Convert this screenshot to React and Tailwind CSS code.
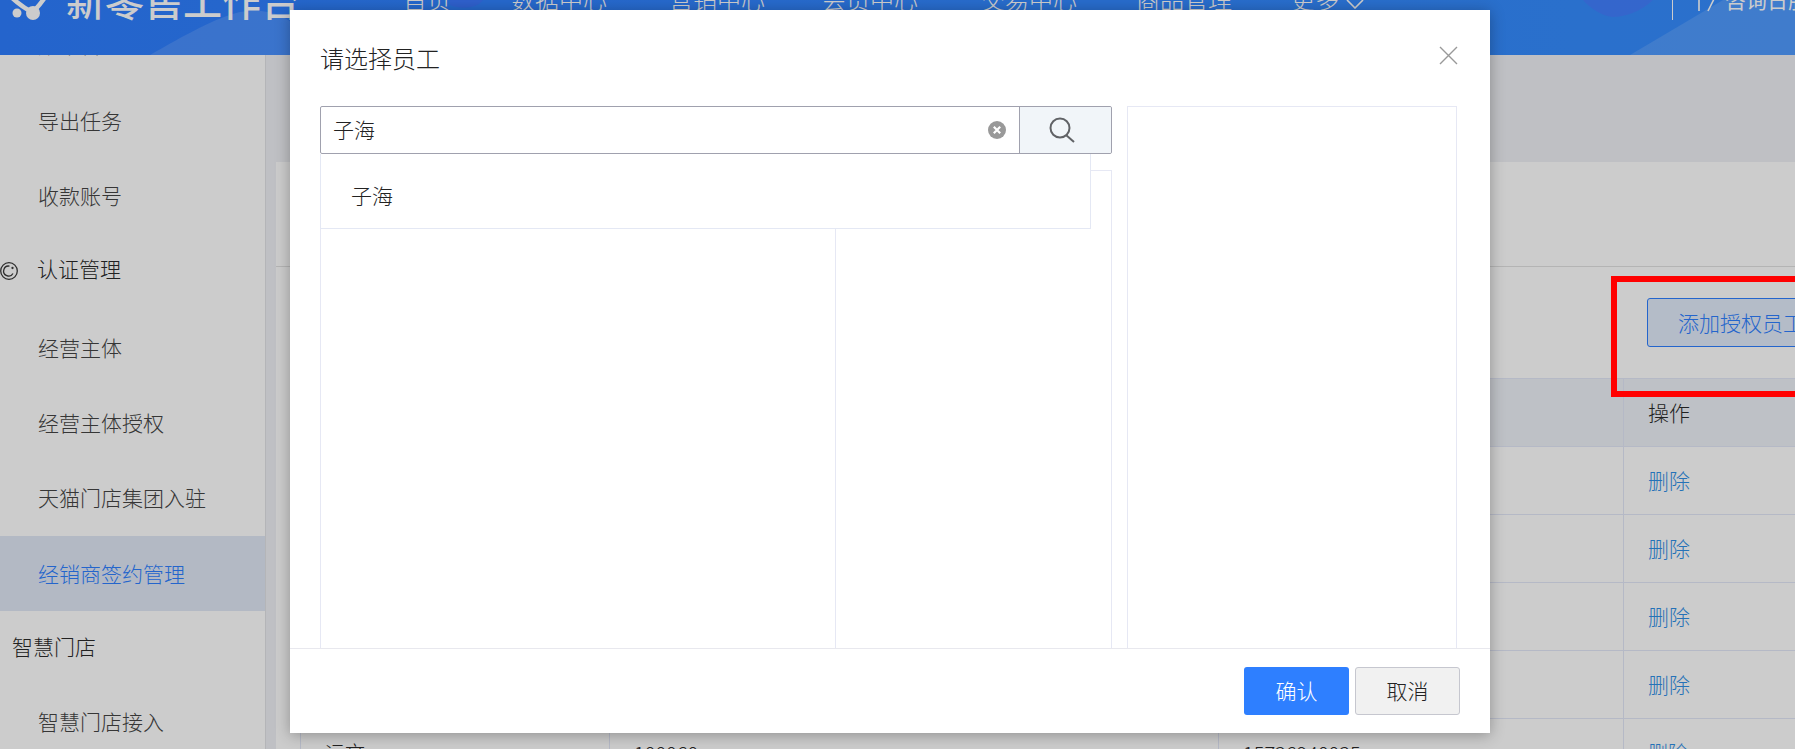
const navItems = [
  { label: '首页', width: 'w-[108px]' },
  { label: '数据中心', width: 'w-[158px]' },
  { label: '营销中心', width: 'w-[153px]' },
  { label: '会员中心', width: 'w-[159px]' },
  { label: '交易中心', width: 'w-[155px]' },
  { label: '商品管理', width: 'w-[155px]' },
  { label: '更多', width: 'w-[100px]', arrow: true },
];

function Chevron() {
  return (
    <svg width="18" height="10" viewBox="0 0 18 10" className="ml-[7px] mt-[9px] shrink-0" fill="none" stroke="currentColor" strokeWidth="1.6">
      <path d="M1 1l8 8 8-8" />
    </svg>
  );
}

function Header() {
  return (
    <header className="relative z-10 h-[55px] overflow-hidden bg-gradient-to-r from-[#2e7eff] to-[#368eff] text-white">
      {/* background shapes of the banner */}
      <svg className="absolute inset-0" width="1795" height="55" viewBox="0 0 1795 55">
        <path d="M150 55C185 35 215 18 240 12C265 8 285 14 300 30L300 55Z" fill="#ffffff" fillOpacity="0.13" />
        <path d="M450 0H483C478 8 462 10 450 5Z" fill="#5b5cff" fillOpacity="0.25" />
        <path d="M1583 0H1653C1640 12 1625 17 1612 17C1600 15 1590 8 1583 0Z" fill="#6a5cff" fillOpacity="0.25" />
        <path d="M1630 55L1723 0H1795V55Z" fill="#ffffff" fillOpacity="0.13" />
      </svg>
      <div className="relative flex h-[60px] -mt-[30px] items-center">
        <svg className="ml-[10px] mt-[28px] shrink-0" width="40" height="60" viewBox="0 0 40 60" fill="none">
          <circle cx="7" cy="29" r="4.5" fill="#fff" />
          <circle cx="23" cy="29" r="7" fill="#fff" />
          <path d="M-2 10C8 20 14 24 22 28C28 24 30 20 36 12" stroke="#fff" strokeWidth="4.5" />
        </svg>
        <div className="ml-[16px] w-[337px] -mt-[2px] text-[39px] font-medium whitespace-nowrap">新零售工作台</div>
        {navItems.map((item) => (
          <div key={item.label} className={`flex items-center text-[24px] font-light -mt-[2px] shrink-0 ${item.width}`}>
            {item.label}
            {item.arrow && <Chevron />}
          </div>
        ))}
        <div className="absolute left-[1672px] top-[30px] h-[20px] w-px bg-white" />
        <div className="absolute left-[1698px] top-[14px] flex items-center text-[21px] whitespace-nowrap">
          <svg width="18" height="26" viewBox="0 0 18 26" fill="none" stroke="currentColor" strokeWidth="1.6">
            <path d="M1 4v20M14 4l3 6-7 14" />
          </svg>
          <span className="ml-[9px]">咨询日服务</span>
        </div>
      </div>
    </header>
  );
}

function AuthIcon() {
  return (
    <svg className="absolute left-0 top-[28px]" width="18" height="20" viewBox="0 0 18 20" fill="none" stroke="#3a3a3a" strokeWidth="1.3">
      <circle cx="9" cy="10" r="8.3" />
      <path d="M13 12.5a5 5 0 1 1-3.5-7.4" />
      <circle cx="12.5" cy="7" r="0.5" fill="#3a3a3a" />
    </svg>
  );
}

function Sidebar() {
  return (
    <aside className="w-[266px] shrink-0 border-r border-[#e2e3e6] bg-white -mt-[47px] text-[21px] font-light text-[#444]">
      <div className="flex h-[75px] items-center pb-[1px] pl-[38px]">账单管理</div>
      <div className="flex h-[75px] items-center pl-[38px]">导出任务</div>
      <div className="flex h-[75px] items-center pl-[38px]">收款账号</div>
      <div className="relative mb-[3px] flex h-[75px] items-center pb-[4px] pl-[37px] text-[#2a2a2a]">
        <AuthIcon />
        认证管理
      </div>
      <div className="flex h-[75px] items-center pb-[2px] pl-[38px]">经营主体</div>
      <div className="flex h-[75px] items-center pb-[2px] pl-[38px]">经营主体授权</div>
      <div className="flex h-[75px] items-center pb-[1px] pl-[38px]">天猫门店集团入驻</div>
      <div className="flex h-[75px] items-center bg-[#e0e8f6] pl-[38px] text-[#2e7fff]">经销商签约管理</div>
      <div className="flex h-[75px] items-center pb-[3px] pl-[12px] text-[#2a2a2a]">智慧门店</div>
      <div className="flex h-[75px] items-center pb-[4px] pl-[38px]">智慧门店接入</div>
    </aside>
  );
}

function TableRow({ cells, className }) {
  return (
    <div className={`grid grid-cols-[309px_609px_405px_172px] border-b border-[#e3e8f8] ${className}`}>
      {cells.map((cell, i) => (
        <div key={i} className="flex items-center border-l border-[#e3e8f8] pl-[24px] whitespace-nowrap">
          {cell}
        </div>
      ))}
    </div>
  );
}

const deleteLink = <span className="text-[#2f8fe6]">删除</span>;

function Content() {
  return (
    <main className="min-w-0 flex-1 bg-[#eff0f5] pl-[10px] pt-[107px]">
      <div className="h-[600px] bg-white text-[21px] font-light text-[#2a2a2a]">
        <div className="h-[105px] border-b border-[#e2e2e2]" />
        <div className="flex h-[111px] pt-[31px] pl-[1371px]">
          <div className="flex h-[49px] w-[190px] shrink-0 items-center rounded-[3px] border border-[#2e7fff] bg-[#e2ebfa] pl-[30px] text-[#2e7fff] whitespace-nowrap">
            添加授权员工
          </div>
        </div>
        <div className="ml-[24px] w-[1495px] border-t border-[#e3e8f8]">
          <TableRow className="h-[68px] bg-[#eef2f8]" cells={['', '', '', '操作']} />
          <TableRow className="h-[68px]" cells={['', '', '', deleteLink]} />
          <TableRow className="h-[68px]" cells={['', '', '', deleteLink]} />
          <TableRow className="h-[68px]" cells={['', '', '', deleteLink]} />
          <TableRow className="h-[68px]" cells={['', '', '', deleteLink]} />
          <TableRow
            className="h-[68px] text-[20px]"
            cells={['运文', '100060', '15736940035', deleteLink]}
          />
        </div>
      </div>
    </main>
  );
}

function EmployeeModal() {
  return (
    <div className="absolute left-[290px] top-[10px] flex h-[723px] w-[1200px] flex-col bg-white text-[21px] font-light text-[#222] shadow-[0_2px_14px_rgba(0,0,0,0.3)]">
      <div className="flex h-[96px] shrink-0 items-start justify-between pl-[30px] pr-[32px] pt-[30px]">
        <h2 className="text-[24px] leading-[36px] font-light">请选择员工</h2>
        <svg className="mt-[6px]" width="19" height="19" viewBox="0 0 19 19" stroke="#999" strokeWidth="1.4">
          <path d="M1 1l17 17M18 1L1 18" />
        </svg>
      </div>

      <div className="flex min-h-0 flex-1 pl-[30px]">
        <div className="relative flex w-[792px] shrink-0 flex-col">
          <div className="flex h-[48px] shrink-0 rounded-[2px] border border-[#a0a1ae]">
            <div className="flex min-w-0 flex-1 items-center pr-[13px]">
              <input readOnly value="子海" className="min-w-0 flex-1 bg-transparent pl-[12px] text-[21px] text-[#222] outline-none" />
              <svg width="18" height="18" viewBox="0 0 18 18" className="shrink-0">
                <circle cx="9" cy="9" r="9" fill="#999" />
                <path d="M5.8 5.8l6.4 6.4M12.2 5.8l-6.4 6.4" stroke="#fff" strokeWidth="2.2" />
              </svg>
            </div>
            <div className="flex w-[92px] shrink-0 items-center justify-center rounded-r-[2px] border-l border-[#a0a1ae] bg-[#f1f5f9] pr-[8px]">
              <svg width="26" height="26" viewBox="0 0 26 26" fill="none" stroke="#606266" strokeWidth="2">
                <circle cx="11" cy="11" r="9.5" />
                <path d="M17 18l8 7" />
              </svg>
            </div>
          </div>

          <div className="mt-[16px] flex min-h-0 flex-1 border-x border-t border-[#e6e8f4]">
            <div className="w-[515px] shrink-0 border-r border-[#e6e8f4]" />
          </div>

          {/* search suggestions */}
          <div className="absolute left-0 top-[48px] flex h-[75px] w-[771px] items-center border-x border-b border-[#e4e8f4] bg-white pl-[30px] pt-[10px]">
            子海
          </div>
        </div>

        <div className="ml-[15px] w-[330px] shrink-0 border-x border-t border-[#e6e8f4]" />
      </div>

      <div className="flex h-[85px] shrink-0 items-start justify-end gap-[6px] border-t border-[#e8e8ee] pr-[30px] pt-[18px]">
        <div className="flex h-[48px] w-[105px] items-center justify-center rounded-[3px] bg-[#2e7fff] text-white">确认</div>
        <div className="flex h-[48px] w-[105px] items-center justify-center rounded-[3px] border border-[#c6c7cf] bg-[#f1f1f1]">取消</div>
      </div>
    </div>
  );
}

export default function App() {
  return (
    <div className="relative h-[749px] w-[1795px] overflow-hidden font-['Noto_Sans_CJK_SC','Liberation_Sans',sans-serif]">
      <Header />
      <div className="flex h-[694px]">
        <Sidebar />
        <Content />
      </div>
      <div className="absolute inset-0 z-20 bg-black/20" />
      <div className="absolute inset-0 z-30">
        <EmployeeModal />
        {/* annotation drawn on the screenshot */}
        <div className="absolute left-[1611px] top-[276px] h-[121px] w-[190px] border-[6px] border-[#ff0000]" />
      </div>
    </div>
  );
}
